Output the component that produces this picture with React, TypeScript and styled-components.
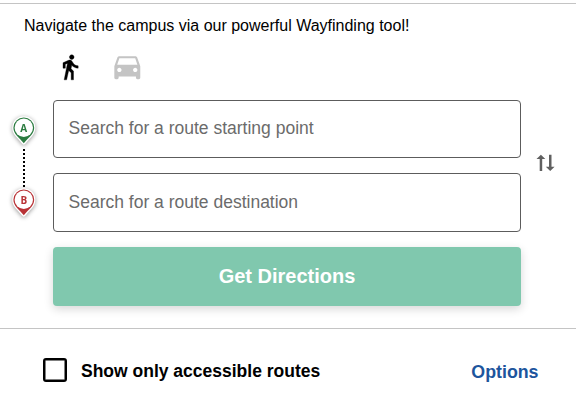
import React from 'react';
import styled, { createGlobalStyle } from 'styled-components';

const GlobalStyle = createGlobalStyle`
  *, *::before, *::after { box-sizing: border-box; }
  body {
    margin: 0;
    background: #fff;
    color: #000;
    font-family: "Liberation Sans", Arial, sans-serif;
    overflow: hidden;
  }
`;

const Page = styled.main`
  display: flex;
  flex-direction: column;
  height: 411px;
  padding-top: 3px;
`;

const Planner = styled.section`
  height: 326px;
  border-top: 1px solid #c4c4c4;
  border-bottom: 1px solid #c4c4c4;
`;

const Intro = styled.p`
  margin: 0;
  padding: 12px 0 0 24px;
  font-size: 16px;
  line-height: 20px;
  white-space: nowrap;
`;

const Modes = styled.div`
  display: flex;
  align-items: center;
  gap: 26px;
  height: 35px;
  margin: 13px 0 16px 55.5px;
`;

const ModeButton = styled.button<{ $active?: boolean }>`
  display: flex;
  padding: 0;
  border: 0;
  background: none;
  color: ${({ $active }) => ($active ? '#000' : '#c4c4c4')};
`;

const RouteForm = styled.div`
  display: grid;
  grid-template-columns: 53px 468px 1fr;
`;

const Markers = styled.div`
  display: flex;
  flex-direction: column;
  align-items: center;
  width: 47px;
  padding-top: 16px;
`;

const PinIcon = styled.svg`
  display: block;
  overflow: visible;
  filter: drop-shadow(0 1px 2px rgba(0, 0, 0, 0.4));
`;

const PinLetter = styled.text`
  font-family: "Open Sans", sans-serif;
  font-size: 10px;
  font-weight: 700;
  text-anchor: middle;
`;

const Connector = styled.svg`
  display: block;
`;

const Fields = styled.div`
  display: flex;
  flex-direction: column;
`;

const Field = styled.input<{ $tall?: boolean }>`
  width: 100%;
  height: ${({ $tall }) => ($tall ? 59 : 58)}px;
  margin-bottom: 15px;
  padding: ${({ $tall }) => ($tall ? '0 14.5px' : '0 14.5px 2px')};
  border: 1px solid #5c5c5c;
  border-radius: 4px;
  background: #fff;
  outline: 0;
  font: 17.5px "Liberation Sans", Arial, sans-serif;
  &::placeholder { color: #6b6b6b; opacity: 1; }
`;

const Submit = styled.button`
  height: 59px;
  padding: 0;
  border: 0;
  border-radius: 4px;
  background: #80c8ae;
  box-shadow: 0 3px 10px rgba(0, 0, 0, 0.16);
  color: #fff;
  font: 700 20px "Liberation Sans", Arial, sans-serif;
`;

const Swap = styled.button`
  align-self: start;
  display: flex;
  margin: 54px 0 0 15px;
  padding: 0;
  border: 0;
  background: none;
  color: #606060;
`;

const Footer = styled.footer`
  display: flex;
  align-items: center;
  justify-content: space-between;
  height: 82px;
  padding: 0 37.5px 0 43px;
`;

const CheckLabel = styled.label`
  display: flex;
  align-items: center;
  gap: 14px;
  font-size: 17.5px;
  font-weight: 700;
`;

const CheckText = styled.span`
  padding-top: 2px;
`;

const Checkbox = styled.input`
  appearance: none;
  width: 24px;
  height: 24px;
  margin: 0;
  border: 2.5px solid #000;
  border-radius: 3px;
  box-shadow: inset 0 0 0 0.5px #000;
`;

const Options = styled.button`
  padding: 4px 0 0;
  border: 0;
  background: none;
  color: #1d559d;
  font: 700 17.8px "Liberation Sans", Arial, sans-serif;
`;

const Pin = ({ letter, color }: { letter: string; color: string }) => (
  <PinIcon width="24" height="29" viewBox="0 0 24 29">
    <path d="M11.8 .2A11.6 11.6 0 0 0 .2 11.8C.2 18.6 5.6 21.8 10 27.6Q11.8 29.8 13.6 27.6C18 21.8 23.4 18.6 23.4 11.8A11.6 11.6 0 0 0 11.8 .2Z" fill="#fff" />
    <path d="M11.8 1.4A10.4 10.4 0 0 0 1.4 11.8C1.4 18.4 7.2 21.3 11.8 27.3C16.4 21.3 22.2 18.4 22.2 11.8A10.4 10.4 0 0 0 11.8 1.4Z" fill={color} />
    <circle cx="11.8" cy="11.8" r="9.2" fill="#fff" />
    <PinLetter x="11.8" y="15.5" fill={color}>{letter}</PinLetter>
  </PinIcon>
);

export default function App() {
  return (
    <>
      <GlobalStyle />
      <Page>
        <Planner>
          <Intro>Navigate the campus via our powerful Wayfinding tool!</Intro>
          <Modes>
            <ModeButton $active aria-label="Walking">
              <svg width="28" height="28" viewBox="0 0 24 24" fill="currentColor">
                <path d="M13.5 5.5c1.1 0 2-.9 2-2s-.9-2-2-2-2 .9-2 2 .9 2 2 2zM9.8 8.9 7 23h2.1l1.8-8 2.1 2v6h2v-7.5l-2.1-2 .6-3C14.8 12 16.8 13 19 13v-2c-1.9 0-3.5-1-4.3-2.4l-1-1.6c-.4-.6-1-1-1.7-1-.3 0-.5.1-.8.1L6 8.3V13h2V9.6l1.8-.7" stroke="currentColor" strokeWidth="0.3" />
              </svg>
            </ModeButton>
            <ModeButton aria-label="Driving">
              <svg width="34.6" height="34.6" viewBox="0 0 24 24" fill="currentColor">
                <path d="M18.92 6.01C18.72 5.42 18.16 5 17.5 5h-11c-.66 0-1.21.42-1.42 1.01L3 12v8c0 .55.45 1 1 1h1c.55 0 1-.45 1-1v-1h12v1c0 .55.45 1 1 1h1c.55 0 1-.45 1-1v-8l-2.08-5.99zM6.5 16c-.83 0-1.5-.67-1.5-1.5S5.67 13 6.5 13s1.5.67 1.5 1.5S7.33 16 6.5 16zm11 0c-.83 0-1.5-.67-1.5-1.5s.67-1.5 1.5-1.5 1.5.67 1.5 1.5-.67 1.5-1.5 1.5zM5 11l1.5-4.5h11L19 11H5z" />
              </svg>
            </ModeButton>
          </Modes>
          <RouteForm>
            <Markers>
              <Pin letter="A" color="#2b7b40" />
              <Connector width="2" height="43" viewBox="0 0 2 43">
                <path d="M1 4V43" stroke="#000" strokeWidth="2" strokeDasharray="2 2" />
              </Connector>
              <Pin letter="B" color="#b83236" />
            </Markers>
            <Fields>
              <Field placeholder="Search for a route starting point" />
              <Field $tall placeholder="Search for a route destination" />
              <Submit>Get Directions</Submit>
            </Fields>
            <Swap aria-label="Swap start and destination">
              <svg width="19" height="17" viewBox="0 0 19 17" fill="currentColor">
                <path d="M3.7 17V5H.5L4.9.8 9.3 5H6.2V17ZM13 .8V12.8H9.8L14.2 17 18.6 12.8H15.5V.8Z" />
              </svg>
            </Swap>
          </RouteForm>
        </Planner>
        <Footer>
          <CheckLabel>
            <Checkbox type="checkbox" />
            <CheckText>Show only accessible routes</CheckText>
          </CheckLabel>
          <Options>Options</Options>
        </Footer>
      </Page>
    </>
  );
}
